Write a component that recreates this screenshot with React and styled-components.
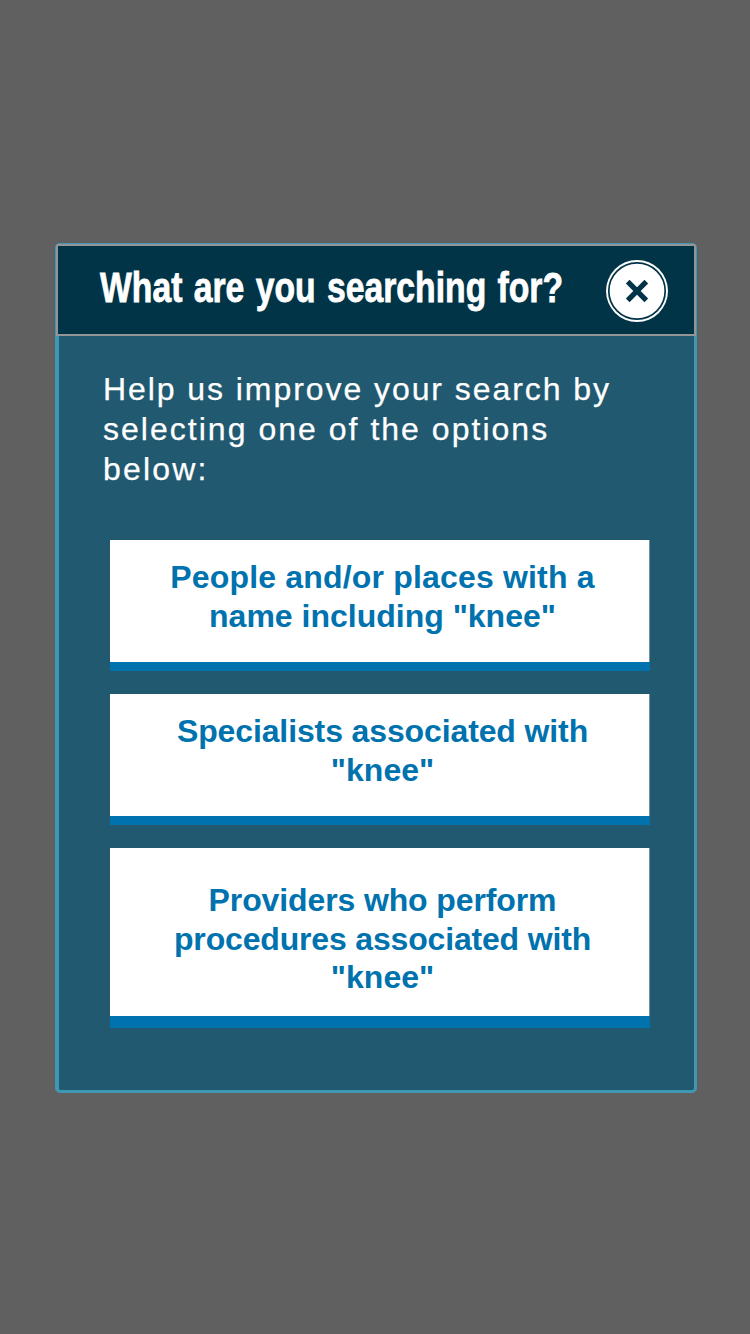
import React from "react";
import styled, { createGlobalStyle } from "styled-components";

const Global = createGlobalStyle`
  *{box-sizing:border-box}
  body{margin:0;background:#606060;font-family:"Liberation Sans",Arial,sans-serif}
`;
const Backdrop = styled.main`
  min-height:1334px;padding:243px 53px 0 55px;background:#606060;
`;
const Dialog = styled.section`
  width:642px;height:850px;border:3px solid #4097b3;border-left-width:4px;border-radius:5px;background:#215970;
`;
const Header = styled.header`
  display:flex;align-items:flex-start;height:92px;margin:-2px -2px 0 -3px;
  padding:14px 26px 0 42px;justify-content:space-between;
  background:#003446;border:2px solid #939598;border-radius:2px 2px 0 0;
`;
const Title = styled.h1`
  margin:3px 0 0;width:464px;color:#fff;font-size:42px;line-height:50px;font-weight:700;white-space:nowrap;
  word-spacing:2.4px;-webkit-text-stroke:0.8px #fff;
  transform:scaleX(0.803);transform-origin:left;
`;
const Close = styled.button`
  flex:none;width:62px;height:62px;padding:0;border:0;background:none;
  svg{display:block}
`;
const Intro = styled.p`
  margin:33px 0 0 44px;color:#fff;font-size:32px;line-height:40px;
  -webkit-text-stroke:0.25px #fff;
`;
const Line = styled.span`
  display:block;width:max-content;letter-spacing:${p => p.$spacing}px;
`;
const Options = styled.div`
  display:flex;flex-direction:column;gap:23px;margin:51px 0 0 51px;width:540px;
`;
const Option = styled.button`
  display:flex;flex-direction:column;align-items:center;height:${p => p.$tall ? 180 : 131}px;
  padding:${p => p.$tall ? 33 : 18}px 0 0 5px;border:0;border-bottom:${p => p.$tall ? 12 : 9}px solid #0072ae;
  background:linear-gradient(to left,#6f929f 1px,#fff 1px);
  color:#0072ae;font:700 32px/${p => p.$tall ? 38.6 : 39}px "Liberation Sans",Arial,sans-serif;
`;
const options = [
  { lines: [["People and/or places with a", 0.17], ['name including "knee"', 0]] },
  { lines: [["Specialists associated with", -0.12], ['"knee"', 0]] },
  { tall: true, lines: [["Providers who perform", -0.12], ["procedures associated with", -0.17], ['"knee"', 0]] },
];
export default function App() {
  return (
    <>
      <Global />
      <Backdrop>
        <Dialog>
          <Header>
            <Title>What are you searching for?</Title>
            <Close aria-label="Close">
              <svg width="62" height="62" viewBox="0 0 62 62">
                <circle cx="31" cy="31" r="31" fill="#fff" />
                <circle cx="31" cy="31" r="28.2" fill="none" stroke="#003446" strokeWidth="1.7" />
                <path d="M21.7 21.7L40.3 40.3M40.3 21.7L21.7 40.3" stroke="#003446" strokeWidth="5.2" />
              </svg>
            </Close>
          </Header>
          <Intro>
            <Line $spacing={1.93}>Help us improve your search by</Line>
            <Line $spacing={2.02}>selecting one of the options</Line>
            <Line $spacing={2.2}>below:</Line>
          </Intro>
          <Options>
            {options.map((option, i) => (
              <Option key={i} $tall={option.tall}>
                {option.lines.map(([text, spacing]) => <Line key={text} $spacing={spacing}>{text}</Line>)}
              </Option>
            ))}
          </Options>
        </Dialog>
      </Backdrop>
    </>
  );
}
